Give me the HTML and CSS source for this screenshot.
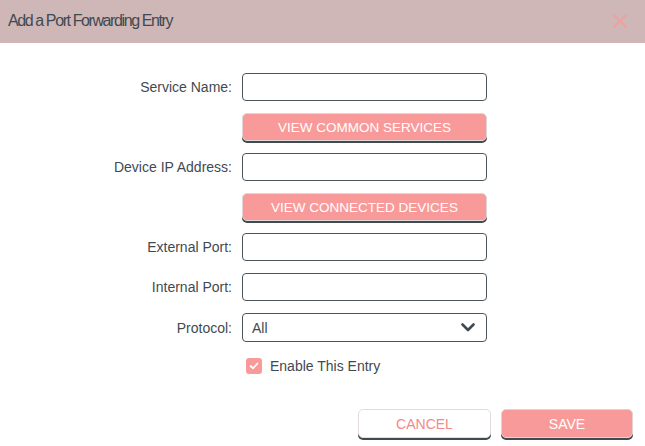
FILE: index.html
```html
<!DOCTYPE html>
<html>
<head>
<meta charset="utf-8">
<link rel="stylesheet" href="styles.css">
</head>
<body>
<div class="dialog">
  <div class="head">
    <h1 class="title">Add a Port Forwarding Entry</h1>
    <span class="close">
      <svg width="16" height="16" viewBox="0 0 16 16"><path d="M1.5 1.5 L14.5 14.5 M14.5 1.5 L1.5 14.5" stroke="#f79a9a" stroke-width="1.6" fill="none"/></svg>
    </span>
  </div>
  <div class="form">
    <label class="lbl">Service Name:</label>
    <input class="field" type="text">
    <span></span>
    <button class="btn pink">VIEW COMMON SERVICES</button>
    <label class="lbl">Device IP Address:</label>
    <input class="field" type="text">
    <span></span>
    <button class="btn pink">VIEW CONNECTED DEVICES</button>
    <label class="lbl">External Port:</label>
    <input class="field" type="text">
    <label class="lbl">Internal Port:</label>
    <input class="field" type="text">
    <label class="lbl">Protocol:</label>
    <div class="select">
      <span>All</span>
      <svg width="14" height="9" viewBox="0 0 14 9"><path d="M1.5 1.5 L7 7 L12.5 1.5" stroke="#3f4a51" stroke-width="2.6" fill="none" stroke-linecap="round" stroke-linejoin="round"/></svg>
    </div>
    <span></span>
    <div class="check">
      <span class="box">
        <svg width="10" height="8" viewBox="0 0 10 8"><path d="M1.5 4 L4 6.3 L8.5 1.5" stroke="#fff" stroke-width="1.7" fill="none" stroke-linecap="round" stroke-linejoin="round"/></svg>
      </span>
      <span class="check-text">Enable This Entry</span>
    </div>
  </div>
  <div class="foot">
    <button class="fbtn cancel">CANCEL</button>
    <button class="fbtn save">SAVE</button>
  </div>
</div>
</body>
</html>
```
FILE: styles.css
```css
* { box-sizing: border-box; }
html, body { margin: 0; padding: 0; background: #fff; }
body { font-family: "Liberation Sans", Arial, sans-serif; color: #3f4a51; width: 645px; height: 446px; overflow: hidden; }
.dialog { width: 645px; }
.head {
  height: 43px;
  background: #cfb7b7;
  display: flex;
  align-items: center;
  justify-content: space-between;
  padding: 0 12px 1px 8px;
}
.title {
  margin: 0;
  font-size: 16px;
  font-weight: normal;
  letter-spacing: -1.4px;
  color: #3f4a51;
}
.close { display: flex; width: 16px; height: 16px; margin-right: 5px; }
.form {
  display: grid;
  grid-template-columns: 232px 245px;
  column-gap: 10px;
  row-gap: 12px;
  padding-top: 30px;
}
.lbl {
  font-size: 14px;
  text-align: right;
  align-self: center;
  color: #3f4a51;
}
.field {
  height: 28px;
  width: 245px;
  border: 1px solid #4a555c;
  border-radius: 4px;
  background: #fff;
  margin: 0;
  padding: 0 8px;
  font: inherit;
}
.btn {
  height: 28px;
  margin: 0;
  border: 1px solid #e2d6d6;
  border-radius: 5px;
  font-family: "Liberation Sans", Arial, sans-serif;
  font-size: 13.5px;
  padding: 0;
  box-shadow: 0 2px 0 #404a51;
}
.pink { background: #f99a9a; color: #fff; }
.select {
  height: 29px;
  border: 1px solid #4a555c;
  border-radius: 4px;
  display: flex;
  align-items: center;
  justify-content: space-between;
  padding: 0 11px 0 9px;
  font-size: 14px;
}
.check {
  height: 24px;
  display: flex;
  align-items: center;
  padding-left: 4px;
  gap: 8px;
}
.box {
  width: 16px;
  height: 16px;
  background: #f99a9a;
  border-radius: 3px;
  display: flex;
  align-items: center;
  justify-content: center;
}
.check-text { font-size: 14px; }
.foot {
  display: flex;
  justify-content: flex-end;
  gap: 10px;
  padding: 31px 12px 0 0;
}
.fbtn {
  width: 133px;
  height: 29px;
  border-radius: 5px;
  font-family: "Liberation Sans", Arial, sans-serif;
  font-size: 14px;
  padding: 0;
  box-shadow: 0 2px 0 #404a51;
}
.cancel { background: #fff; color: #f38989; border: 1px solid #e4dcdc; }
.save { background: #f99a9a; color: #fff; border: 1px solid #e8d0d0; width: 132px; }
```
